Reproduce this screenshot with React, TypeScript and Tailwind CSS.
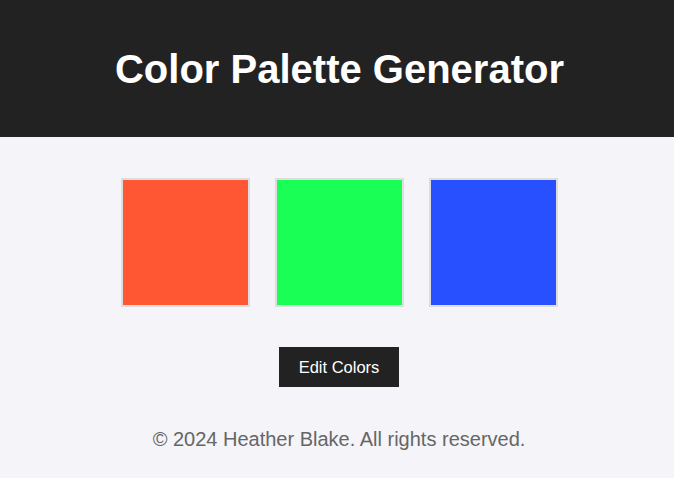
import React from "react";

const colors = ["#FF5733", "#1AFF55", "#2950FF"];

const App = () => {
  return (
    <div
      className="min-h-[478px] bg-[#f4f4f9] flex flex-col"
      style={{ fontFamily: '"Liberation Sans", Arial, sans-serif' }}
    >
      <header className="h-[137px] bg-[#222222] flex items-center justify-center pl-[5px]">
        <h1 className="text-[40px] font-bold text-white leading-none">
          Color Palette Generator
        </h1>
      </header>
      <main className="flex flex-col items-center pl-[4px]">
        <div className="flex gap-[25px] mt-[41px]">
          {colors.map((c) => (
            <div
              key={c}
              className="w-[129px] h-[129px] border-2 border-[#dddddd]"
              style={{ backgroundColor: c }}
            />
          ))}
        </div>
        <button className="mt-[40px] h-[40px] px-[20px] bg-[#222222] text-white text-[16.5px]">
          Edit Colors
        </button>
        <footer className="mt-[37px] text-[20px] text-[#666666]">
          © 2024 Heather Blake. All rights reserved.
        </footer>
      </main>
    </div>
  );
};

export default App;
